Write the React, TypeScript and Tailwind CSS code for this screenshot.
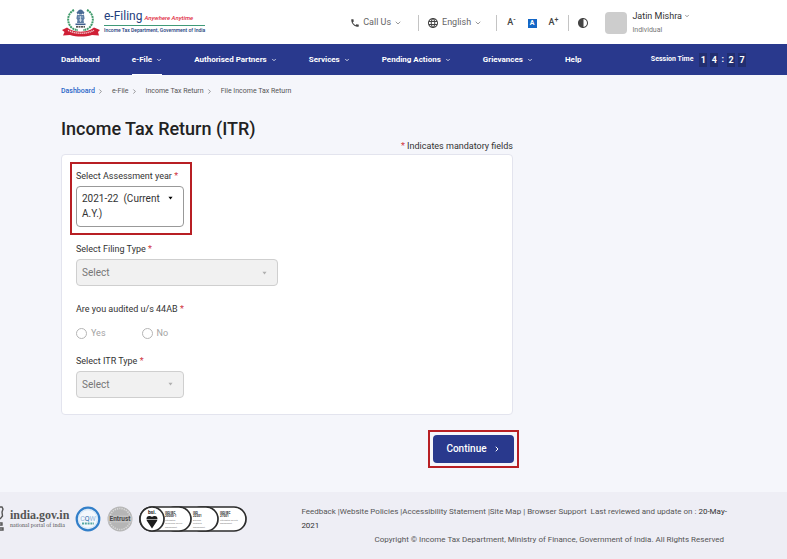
import type { ReactNode } from 'react'
import { FiChevronDown, FiChevronRight } from 'react-icons/fi'
import { MdContrast, MdLanguage, MdPhone } from 'react-icons/md'

const navigation = [
    { name: 'Dashboard', menu: false },
    { name: 'e-File', menu: true, active: true },
    { name: 'Authorised Partners', menu: true },
    { name: 'Services', menu: true },
    { name: 'Pending Actions', menu: true },
    { name: 'Grievances', menu: true },
    { name: 'Help', menu: false },
]

const breadcrumbs = ['Dashboard', 'e-File', 'Income Tax Return', 'File Income Tax Return']

function Emblem() {
    return (
        <svg viewBox="0 0 40 29" className="h-[29px] w-10 shrink-0" aria-hidden="true">
            <path d="M13 2C7 5 5 13 10 19c2 2 4 3 7 3M26 2c6 3 8 11 3 17-2 2-4 3-7 3" fill="none" stroke="#3f9a6b" strokeWidth="2" strokeDasharray="2 0.7" />
            <circle cx="19.5" cy="4" r="2.6" fill="#4a6b96" />
            <path d="M15.500 4.500l1.500-1.500v4zM23.500 4.500l-1.500-1.500v4z" fill="#4a6b96" />
            <path d="M16 7h7l.6 3.500-1 1.500.4 3h-7l.4-3-1-1.500z" fill="#5f7fa6" />
            <path d="M17.500 9h1.200M20.500 9h1.200M18 12h3M19.500 8v6" stroke="#dfe8f1" strokeWidth=".8" />
            <path d="M14.500 16.300h10" stroke="#3f5f8c" strokeWidth="1.600" />
            <path d="M15 18.800h9" stroke="#222" strokeWidth="1.300" strokeDasharray="2 .5" />
            <path d="M1 22l5-2.500 3 2c7 3 14 3 21 0l3-2 6 2.500-2 2 1 3.500-7-.5c-7 2-15 2-22 0l-7 .5 1.500-3.500z" fill="#cf1f35" />
            <path d="M7 22.300c8 4 18 4 26 0" fill="none" stroke="#f6d5d9" strokeWidth="1.500" strokeDasharray="1.200 .8" />
        </svg>
    )
}

function Divider() {
    return <span className="h-4 w-px bg-[#c4c4c4]" />
}

function Required() {
    return <span className="text-[#d0353f]">*</span>
}

function Caret({ className }: { className: string }) {
    return (
        <svg viewBox="0 0 6 4" className={`pointer-events-none col-start-1 row-start-1 h-1 w-[5px] justify-self-end ${className}`} aria-hidden="true">
            <path d="M0.500 0.500h5L3 3.700z" fill="currentColor" />
        </svg>
    )
}

function DisabledSelect({ id, label, width }: { id: string; label: string; width: string }) {
    return (
        <div className="flex flex-col gap-0.5">
            <label htmlFor={id} className="leading-4">{label} <Required /></label>
            <div className={`grid items-center ${width}`}>
                <select id={id} disabled className="col-start-1 row-start-1 h-[27px] w-full appearance-none rounded-sm border border-[#cfcfcf] bg-[#f1f1f1] px-[5px] text-[10px] text-[#777] opacity-100">
                    <option>Select</option>
                </select>
                <Caret className="mr-[11px] text-[#b0b0b0]" />
            </div>
        </div>
    )
}

function Radio({ children }: { children: ReactNode }) {
    return (
        <label className="flex items-center gap-1 text-[#a3a3a3]">
            <input type="radio" name="audited" disabled className="size-[11px] appearance-none rounded-full border border-[#b5b5b5] bg-white" />
            {children}
        </label>
    )
}

function Header() {
    return (
        <header>
            <div className="flex h-11 items-center bg-white pl-[61px] text-[9px] text-[#666]">
                <a href="#" className="flex items-center gap-[3px]" aria-label="e-Filing home">
                    <Emblem />
                    <span className="flex flex-col">
                        <span className="flex items-baseline gap-0.5 leading-[14px] text-[#24407c]">
                            <span className="text-[12px]">e-Filing</span>
                            <span className="text-[6px] font-medium italic text-[#e0283c]">Anywhere Anytime</span>
                        </span>
                        <span className="h-px bg-[#3f9a78]" />
                        <span className="whitespace-nowrap text-[5px] font-medium leading-[9px] text-[#24407c]">Income Tax Department, Government of India</span>
                    </span>
                </a>
                <div className="ml-auto flex items-center pr-[97px] pt-0.5">
                    <button className="flex items-center gap-[3px]">
                        <MdPhone className="size-2.5 text-[#444]" />
                        Call Us
                        <FiChevronDown className="size-2" />
                    </button>
                    <span className="mx-4 flex items-center"><Divider /></span>
                    <button className="-ml-2 mr-3.5 flex items-center gap-[3px]">
                        <MdLanguage className="size-3 text-[#444]" />
                        English
                        <FiChevronDown className="size-2" />
                    </button>
                    <Divider />
                    <div className="mx-2.5 flex items-center gap-3 font-medium text-[#444]">
                        <button aria-label="Decrease text size">A<sup className="text-[7px]">-</sup></button>
                        <button className="grid size-[9px] place-items-center bg-[#1467c6] text-[7px] font-bold leading-none text-white" aria-label="Default text size">A</button>
                        <button aria-label="Increase text size">A<sup className="text-[7px]">+</sup></button>
                    </div>
                    <Divider />
                    <button aria-label="Contrast" className="ml-2 mr-4"><MdContrast className="size-3 text-[#444]" /></button>
                    <button className="flex items-center gap-[5px] text-left">
                        <span className="size-[22px] rounded-sm bg-[#cdcdcd]" />
                        <span className="flex flex-col">
                            <span className="flex items-center gap-0.5 leading-[14px] text-[#333]">Jatin Mishra <FiChevronDown className="size-1.5" /></span>
                            <span className="text-[7px] leading-[14px] text-[#777]">Individual</span>
                        </span>
                    </button>
                </div>
            </div>
            <nav className="flex h-[31px] items-center justify-between bg-[#29398d] pl-[61px] pr-[41px] text-[8px] font-bold text-white">
                <div className="flex h-full gap-8">
                    {navigation.map((item) => (
                        <a key={item.name} href="#" className={`flex items-center gap-1 whitespace-nowrap border-y border-t-transparent ${item.active ? 'border-b-white' : 'border-b-transparent'}`}>
                            {item.name}
                            {item.menu && <FiChevronDown className="size-1.5" strokeWidth={3} />}
                        </a>
                    ))}
                </div>
                <div className="flex items-center gap-1.5 text-[7px]">
                    Session Time
                    <span className="flex items-center gap-[3px] text-[9px]">
                        {['1', '4', ':', '2', '7'].map((c, i) => (
                            <span key={i} className={c === ':' ? '' : 'w-2 bg-[#222e70] text-center leading-[14px]'}>{c}</span>
                        ))}
                    </span>
                </div>
            </nav>
        </header>
    )
}

function AshokaEdge() {
    return (
        <svg viewBox="0 0 4 30" className="h-[30px] w-1" aria-hidden="true">
            <path d="M0 3h2l1 2-1 3 .5 4L0 15M0 19h2v2H0M0 24h3v2H0" fill="none" stroke="#555" strokeWidth="1.400" />
        </svg>
    )
}

function Badges() {
    return (
        <>
            <svg viewBox="0 0 26 26" className="size-[26px] shrink-0" role="img" aria-label="CQW">
                <circle cx="13" cy="13" r="11.300" fill="#f4f8fd" stroke="#327fc9" strokeWidth="2.200" />
                <circle cx="13" cy="13" r="9.300" fill="none" stroke="#b9d6ef" strokeWidth=".6" />
                <text x="13" y="14.500" textAnchor="middle" fontSize="7" fill="#8fb4d8">C<tspan fill="#2766a8">Q</tspan>W</text>
                <path d="M7 17.500h12" stroke="#55a7a0" strokeWidth="2" strokeDasharray="2 .8" />
            </svg>
            <svg viewBox="0 0 26 26" className="ml-1.5 size-[26px] shrink-0" role="img" aria-label="Entrust">
                <circle cx="13" cy="13" r="12.500" fill="#b5b5b5" />
                <circle cx="13" cy="13" r="10.500" fill="none" stroke="#d8d8d8" strokeWidth="1.600" strokeDasharray="1.300 1" />
                <rect x="1" y="9.500" width="24" height="7" fill="#c3c3c3" />
                <text x="13" y="15.300" textAnchor="middle" fontSize="6.500" fontWeight="700" fill="#4c4c4c">Entrust</text>
            </svg>
            <svg viewBox="0 0 108 26" className="ml-1.5 h-[26px] w-[108px] shrink-0" role="img" aria-label="BSI certifications">
                <g fill="#fff" stroke="#2c2c2c" strokeWidth="1.700">
                    <rect x="50" y="1" width="57" height="24" rx="12" />
                    <rect x="24" y="1" width="55" height="24" rx="12" />
                    <rect x="1" y="1" width="51" height="24" rx="12" />
                    <circle cx="13" cy="13" r="12" />
                </g>
                <text x="13" y="7.500" textAnchor="middle" fontSize="5" fontWeight="700" fill="#222">bsi.</text>
                <path d="M13 22.500l-5-7.500c-1-2-.5-5 2-5 1.300 0 2.300.2 3 1 .7-.8 1.700-1 3-1 2.500 0 3 3 2 5z" fill="#1c1c1c" />
                <path d="M7 13.500h12" stroke="#fff" strokeWidth=".6" />
                <g fontSize="3" fontWeight="700" fill="#222">
                    <text x="26" y="7.500">ISO/IEC</text><text x="26" y="11">20000-1</text>
                    <text x="54" y="7.500">ISO</text><text x="54" y="11">22301</text>
                    <text x="81" y="7.500">ISO/IEC</text><text x="81" y="11">27001</text>
                </g>
                <g fontSize="2" fill="#777">
                    <text x="26" y="14.500">Information</text><text x="26" y="18">Technology Service</text><text x="26" y="21.500">Management</text>
                    <text x="54" y="14.500">Business</text><text x="54" y="18">Continuity</text><text x="54" y="21.500">Management</text>
                    <text x="81" y="14.500">Information Security</text><text x="81" y="18">Management</text>
                </g>
            </svg>
        </>
    )
}

function Footer() {
    return (
        <footer className="flex flex-1 items-start bg-[#eeeef5] pb-2 pr-12 pt-3 text-[8px] text-[#555]">
            <div className="flex shrink-0 items-center">
                <AshokaEdge />
                <a href="#" className="ml-1.5 mr-1.5 flex flex-col font-['Liberation_Serif',serif] text-[#555]">
                    <span className="text-[12px] font-bold leading-3">india.gov.in</span>
                    <span className="whitespace-nowrap text-[6px] leading-2">national portal of india</span>
                </a>
                <Badges />
            </div>
            <div className="ml-[54px] flex-1 pt-px leading-[14px]">
                <p>
                    <a href="#">Feedback</a><span> |</span><a href="#">Website Policies</a><span> |</span><a href="#">Accessibility Statement</a><span> |</span><a href="#">Site Map</a><span> | </span><a href="#">Browser Support</a>
                    <span className="ml-0.5"> Last reviewed and update on : </span><span className="text-[#333]">20-May-</span><wbr /><span className="text-[#333]">2021</span>
                </p>
                <p className="pr-[15px] text-right">Copyright © Income Tax Department, Ministry of Finance, Government of India. All Rights Reserved</p>
            </div>
        </footer>
    )
}

export default function App() {
    return (
        <div className="flex min-h-screen flex-col bg-[#f5f6fb] font-[Roboto,sans-serif] text-[9px] text-[#333]">
            <Header />
            <main className="pb-6 pl-[61px] pr-12">
                <nav aria-label="Breadcrumb" className="flex items-center gap-2 pt-2 text-[7px] leading-4 text-[#555]">
                    {breadcrumbs.map((crumb, i) => (
                        <span key={crumb} className="flex items-center gap-0.5">
                            <a href="#" className={i === 0 ? 'font-medium text-[#2a66c8]' : ''}>{crumb}</a>
                            {i < breadcrumbs.length - 1 && <FiChevronRight className="size-[7px]" />}
                        </span>
                    ))}
                </nav>
                <form className="flex w-2/3 flex-col">
                    <h1 className="mt-5 text-[18px] font-medium leading-5 text-[#222]">Income Tax Return (ITR)</h1>
                    <p className="pb-px text-right leading-[14px]"><Required /> Indicates mandatory fields</p>
                    <div className="flex flex-col rounded-sm border border-[#e3e4ee] bg-white px-2 pb-4 pt-[7px]">
                        <div className="flex flex-col gap-0.5 self-start border-2 border-[#b81f24] pb-1.5 pl-1 pr-1.5 pt-1">
                            <label htmlFor="year" className="leading-4">Select Assessment year <Required /></label>
                            <div className="grid w-[108px]">
                                <select id="year" className="col-start-1 row-start-1 h-full w-full appearance-none rounded-sm border border-[#999] bg-white text-transparent">
                                    <option>2021-22 (Current A.Y.)</option>
                                </select>
                                {/* the selected value wraps, which a native select can't do */}
                                <span aria-hidden="true" className="pointer-events-none col-start-1 row-start-1 whitespace-pre-wrap pb-1.5 pl-1.5 pr-5 pt-[5px] text-[10px] leading-[15px]">{'2021-22  (Current A.Y.)'}</span>
                                <Caret className="mr-[11px] mt-2.5 text-black" />
                            </div>
                        </div>
                        <div className="flex flex-col px-1.5 pt-1.5">
                            <DisabledSelect id="filing" label="Select Filing Type" width="w-[202px]" />
                            <fieldset className="mb-3 mt-[15px]">
                                <legend className="leading-4">Are you audited u/s 44AB <Required /></legend>
                                <div className="mt-2.5 flex gap-9">
                                    <Radio>Yes</Radio>
                                    <Radio>No</Radio>
                                </div>
                            </fieldset>
                            <DisabledSelect id="itr" label="Select ITR Type" width="w-[108px]" />
                        </div>
                    </div>
                </form>
                <div className="mt-[15px] flex w-2/3 justify-end">
                    <div className="-mr-1.5 border-2 border-[#b81f24] p-[3px]">
                        <button className="flex h-7 w-[81px] items-center justify-center gap-1.5 rounded-sm bg-[#29398d] text-[10px] font-medium text-white">
                            Continue <FiChevronRight className="size-2" strokeWidth={3} />
                        </button>
                    </div>
                </div>
            </main>
            <Footer />
        </div>
    )
}
